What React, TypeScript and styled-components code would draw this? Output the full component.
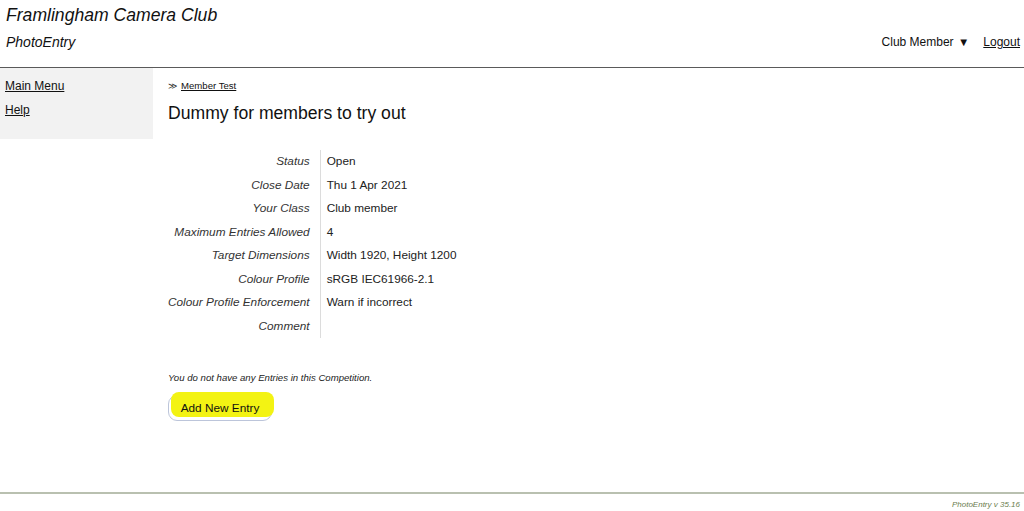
import { createGlobalStyle, styled } from 'styled-components';

const GlobalStyle = createGlobalStyle`
  html, body {
    margin: 0;
    padding: 0;
    background: #fff;
  }
  body {
    font-family: "Liberation Sans", Arial, sans-serif;
    color: #1a1a1a;
  }
`;

const details: [string, string][] = [
  ['Status', 'Open'],
  ['Close Date', 'Thu 1 Apr 2021'],
  ['Your Class', 'Club member'],
  ['Maximum Entries Allowed', '4'],
  ['Target Dimensions', 'Width 1920, Height 1200'],
  ['Colour Profile', 'sRGB IEC61966-2.1'],
  ['Colour Profile Enforcement', 'Warn if incorrect'],
  ['Comment', ''],
];

const App = () => {
  return (
    <Page>
      <GlobalStyle />
      <Header>
        <SiteTitle>Framlingham Camera Club</SiteTitle>
        <HeaderRow>
          <AppName>PhotoEntry</AppName>
          <UserNav>
            <UserMenu>
              Club Member <Caret>▼</Caret>
            </UserMenu>
            <NavLink href="#">Logout</NavLink>
          </UserNav>
        </HeaderRow>
      </Header>

      <Body>
        <Sidebar>
          <SideLink href="#">Main Menu</SideLink>
          <SideLink href="#">Help</SideLink>
        </Sidebar>

        <Content>
          <Breadcrumb>
            <Chevrons>≫</Chevrons>
            <CrumbLink href="#">Member Test</CrumbLink>
          </Breadcrumb>
          <Heading>Dummy for members to try out</Heading>

          <DetailTable>
            {details.map(([label, value]) => (
              <DetailRow key={label}>
                <Label>{label}</Label>
                <Value>{value}</Value>
              </DetailRow>
            ))}
          </DetailTable>

          <Notice>You do not have any Entries in this Competition.</Notice>
          <AddButton type="button">
            <ButtonText>Add New Entry</ButtonText>
          </AddButton>
        </Content>
      </Body>

      <Footer>
        <Version>PhotoEntry v 35.16</Version>
      </Footer>
    </Page>
  );
};

export default App;

const Page = styled.div`
  display: flex;
  flex-direction: column;
  min-height: 511px;
`;

const Header = styled.header`
  display: flex;
  flex-direction: column;
  height: 68px;
  box-sizing: border-box;
  padding: 4px 4px 0 6px;
  border-bottom: 1px solid #5a5a5a;
`;

const SiteTitle = styled.h1`
  margin: 0;
  font-size: 17.6px;
  font-weight: 400;
  font-style: italic;
  line-height: 22px;
  color: #111;
`;

const HeaderRow = styled.div`
  display: flex;
  align-items: center;
  justify-content: space-between;
  margin-top: 6px;
`;

const AppName = styled.div`
  font-size: 14px;
  font-style: italic;
  line-height: 20px;
  color: #111;
`;

const UserNav = styled.nav`
  display: flex;
  align-items: center;
  gap: 14px;
  font-size: 12px;
`;

const UserMenu = styled.span`
  color: #111;
`;

const Caret = styled.span`
  font-size: 11.5px;
  margin-left: 1px;
`;

const NavLink = styled.a`
  color: #111;
  text-decoration: underline;
`;

const Body = styled.div`
  display: flex;
  flex: 1;
  align-items: flex-start;
`;

const Sidebar = styled.aside`
  display: flex;
  flex-direction: column;
  width: 153px;
  height: 71px;
  box-sizing: border-box;
  padding: 6px 5px 0;
  background: #f2f2f2;
`;

const SideLink = styled.a`
  font-size: 12px;
  line-height: 24px;
  color: #111;
  text-decoration: underline;
`;

const Content = styled.main`
  display: flex;
  flex-direction: column;
  align-items: flex-start;
  padding: 11px 0 0 15px;
`;

const Breadcrumb = styled.div`
  display: flex;
  align-items: center;
  gap: 4px;
  font-size: 9.6px;
  line-height: 14px;
`;

const Chevrons = styled.span`
  font-size: 9px;
  color: #333;
`;

const CrumbLink = styled.a`
  color: #111;
  text-decoration: underline;
`;

const Heading = styled.h2`
  margin: 7px 0 0;
  font-size: 17.6px;
  font-weight: 400;
  line-height: 26px;
  color: #111;
`;

const DetailTable = styled.div`
  display: grid;
  grid-template-columns: max-content max-content;
  margin-top: 24px;
`;

const DetailRow = styled.div`
  display: contents;
`;

const Label = styled.div`
  padding-right: 10px;
  border-right: 1px solid #dcdcdc;
  font-size: 11.8px;
  font-style: italic;
  line-height: 23.5px;
  text-align: right;
  color: #333;
`;

const Value = styled.div`
  padding-left: 6px;
  font-size: 11.8px;
  line-height: 23.5px;
  color: #222;
`;

const Notice = styled.p`
  margin: 34px 0 0;
  font-size: 9.6px;
  font-style: italic;
  line-height: 12px;
  color: #222;
`;

const AddButton = styled.button`
  position: relative;
  margin-top: 11px;
  width: 104px;
  height: 26px;
  padding: 0;
  border: 1px solid #bcc5da;
  border-radius: 9px;
  background: #fff;
  font-family: "Liberation Sans", Arial, sans-serif;
  cursor: pointer;

  &::before {
    content: '';
    position: absolute;
    top: -4px;
    left: 2px;
    right: -3px;
    bottom: 3px;
    border-radius: 8px;
    background: #f3f313;
  }
`;

const ButtonText = styled.span`
  position: relative;
  top: -1px;
  font-size: 11.8px;
  color: #111;
`;

const Footer = styled.footer`
  display: flex;
  justify-content: flex-end;
  height: 19px;
  box-sizing: border-box;
  padding: 6px 4px 0;
  border-top: 2px solid #b9c0b0;
`;

const Version = styled.span`
  font-size: 8px;
  font-style: italic;
  color: #6b7d4e;
`;
